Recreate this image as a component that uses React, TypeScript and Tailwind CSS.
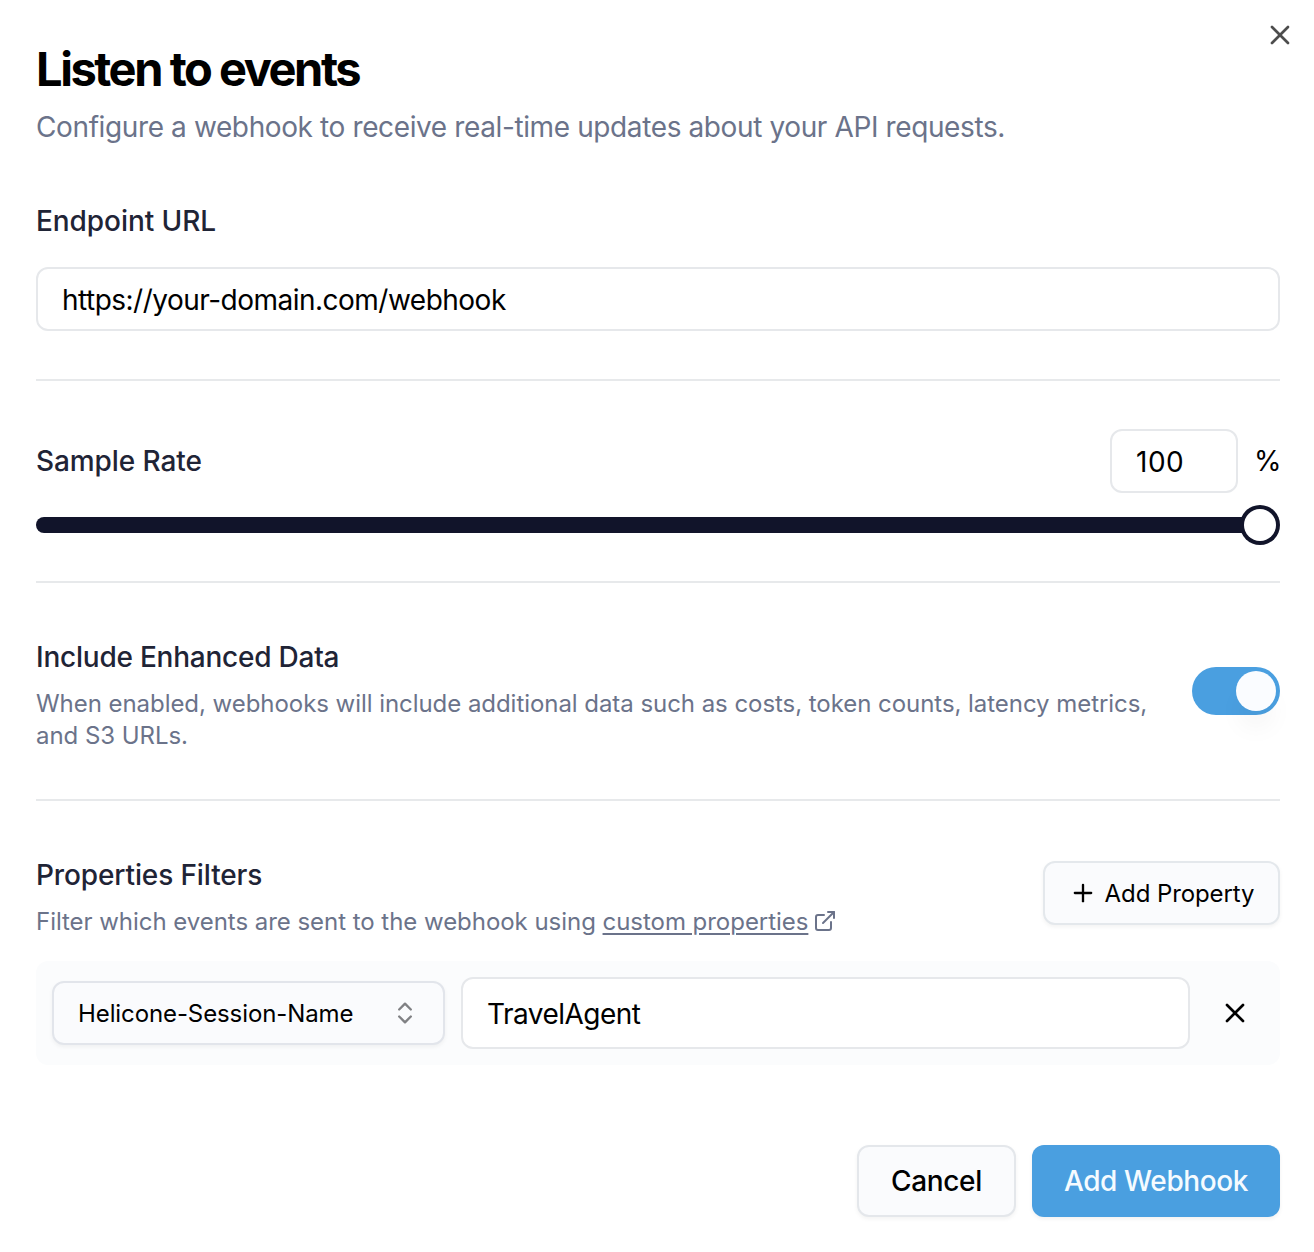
import React from "react";
import { X, Plus, ChevronsUpDown, ExternalLink } from "lucide-react";

const label = "text-[28px] leading-[28px] font-medium text-[#1f2436] whitespace-nowrap";

export default function App() {
  return (
    <main className="flex h-[1252px] w-[1314px] flex-col bg-white pl-9 pr-[34px] font-['Inter',sans-serif] text-black">
      <header className="relative h-[207px] shrink-0 pt-[44px]">
        <h1 className="text-[47px] leading-[49px] font-[650] tracking-[-2.45px]">Listen to events</h1>
        <p className="mt-[14px] text-[28px] leading-[40px] tracking-[-0.385px] text-[#6b738a] whitespace-nowrap">Configure a webhook to receive real-time updates about your API requests.</p>
        <button aria-label="Close" className="absolute -right-4 top-[19px]"><X size={32} strokeWidth={2} className="text-[#4d4d4d]" /></button>
      </header>
      <section className="h-[174px] shrink-0 border-b-2 border-[#e7e9eb]">
        <div className={`${label} tracking-[-0.07px]`}>Endpoint URL</div>
        <div className="mt-8 flex h-16 items-center rounded-xl border-2 border-[#e6e8eb] px-6 pt-0.5 text-[28px] tracking-[-0.51px]">https://your-domain.com/webhook</div>
      </section>
      <section className="h-[202px] shrink-0 border-b-2 border-[#e7e9eb] pt-12">
        <div className="flex h-16 items-center">
          <div className={`${label} tracking-[-0.08px]`}>Sample Rate</div>
          <div className="ml-auto flex h-16 w-32 items-center rounded-xl border-2 border-[#e6e8eb] px-6 pt-0.5 text-[28px] tracking-[0.5px]">100</div>
          <span className="ml-4 w-[26px] text-[28px]">%</span>
        </div>
        <div className="mt-3 flex h-10 items-center">
          <div className="h-4 flex-1 rounded-l-full bg-[#11142a]" />
          <div className="-ml-1 flex size-10 items-center justify-center rounded-full bg-[#11142a]"><div className="size-8 rounded-full bg-white" /></div>
        </div>
      </section>
      <section className="flex h-[218px] shrink-0 justify-between border-b-2 border-[#e7e9eb] pt-[60px]">
        <div>
          <div className={`${label} tracking-[-0.23px]`}>Include Enhanced Data</div>
          <p className="mt-[17px] text-[24px] leading-8 tracking-[-0.05px] text-[#6b738a] whitespace-nowrap">When enabled, webhooks will include additional data such as costs, token counts, latency metrics,<br />and S3 URLs.</p>
        </div>
        <div className="mt-6 flex h-12 w-[88px] items-center justify-end rounded-full bg-[#4a9fe0] p-1"><div className="size-10 rounded-full bg-[#fafcff] shadow-[0_20px_24px_-2px_rgba(0,0,0,0.04)]" /></div>
      </section>
      <section className="shrink-0 pt-[60px]">
        <div className="flex justify-between">
          <div>
            <div className={`${label} tracking-[-0.12px]`}>Properties Filters</div>
            <p className="mt-[17px] flex items-center text-[24px] leading-8 tracking-[-0.04px] text-[#6b738a] whitespace-nowrap">Filter which events are sent to the webhook using&nbsp;<a className="flex items-center"><span className="underline decoration-2 underline-offset-[3px]">custom properties</span><ExternalLink size={24} className="mb-0.5 ml-[5px]" /></a></p>
          </div>
          <button className="flex h-16 w-[237px] items-center justify-center rounded-xl border-2 border-[#e4e8ec] bg-[#fafbfd] text-[24px] tracking-[-0.1px] shadow-[0_2px_4px_rgba(0,0,0,0.05)]"><Plus size={28} className="mr-2" /><span className="pt-0.5">Add Property</span></button>
        </div>
        <div className="mt-[23px] flex h-[104px] items-center rounded-xl bg-[#fbfcfd] px-4">
          <button className="flex h-16 w-[393px] items-center justify-between rounded-xl border-2 border-[#e2e5eb] bg-[#fafbfd] px-6 text-[24px] tracking-[-0.1px] shadow-[0_2px_4px_rgba(0,0,0,0.05)]"><span className="pt-0.5">Helicone-Session-Name</span><ChevronsUpDown size={28} className="text-[#808184]" /></button>
          <div className="ml-4 flex h-[72px] w-[729px] items-center rounded-xl border-2 border-[#e6e8eb] bg-white px-6 pt-0.5 text-[28px] tracking-[-0.53px]">TravelAgent</div>
          <button aria-label="Remove" className="ml-[29px]"><X size={32} /></button>
        </div>
      </section>
      <footer className="mt-20 flex justify-end gap-4">
        <button className="h-[72px] w-[159px] rounded-xl border-2 border-[#e4e7eb] bg-[#fafbfd] text-[28px] font-medium tracking-[-0.35px] shadow-[0_2px_4px_rgba(0,0,0,0.05)]">Cancel</button>
        <button className="h-[72px] w-[248px] rounded-xl bg-[#4a9fe0] text-[28px] font-medium tracking-[-0.4px] text-[#f5fbff] shadow-[0_2px_4px_rgba(0,0,0,0.06)]">Add Webhook</button>
      </footer>
    </main>
  );
}
